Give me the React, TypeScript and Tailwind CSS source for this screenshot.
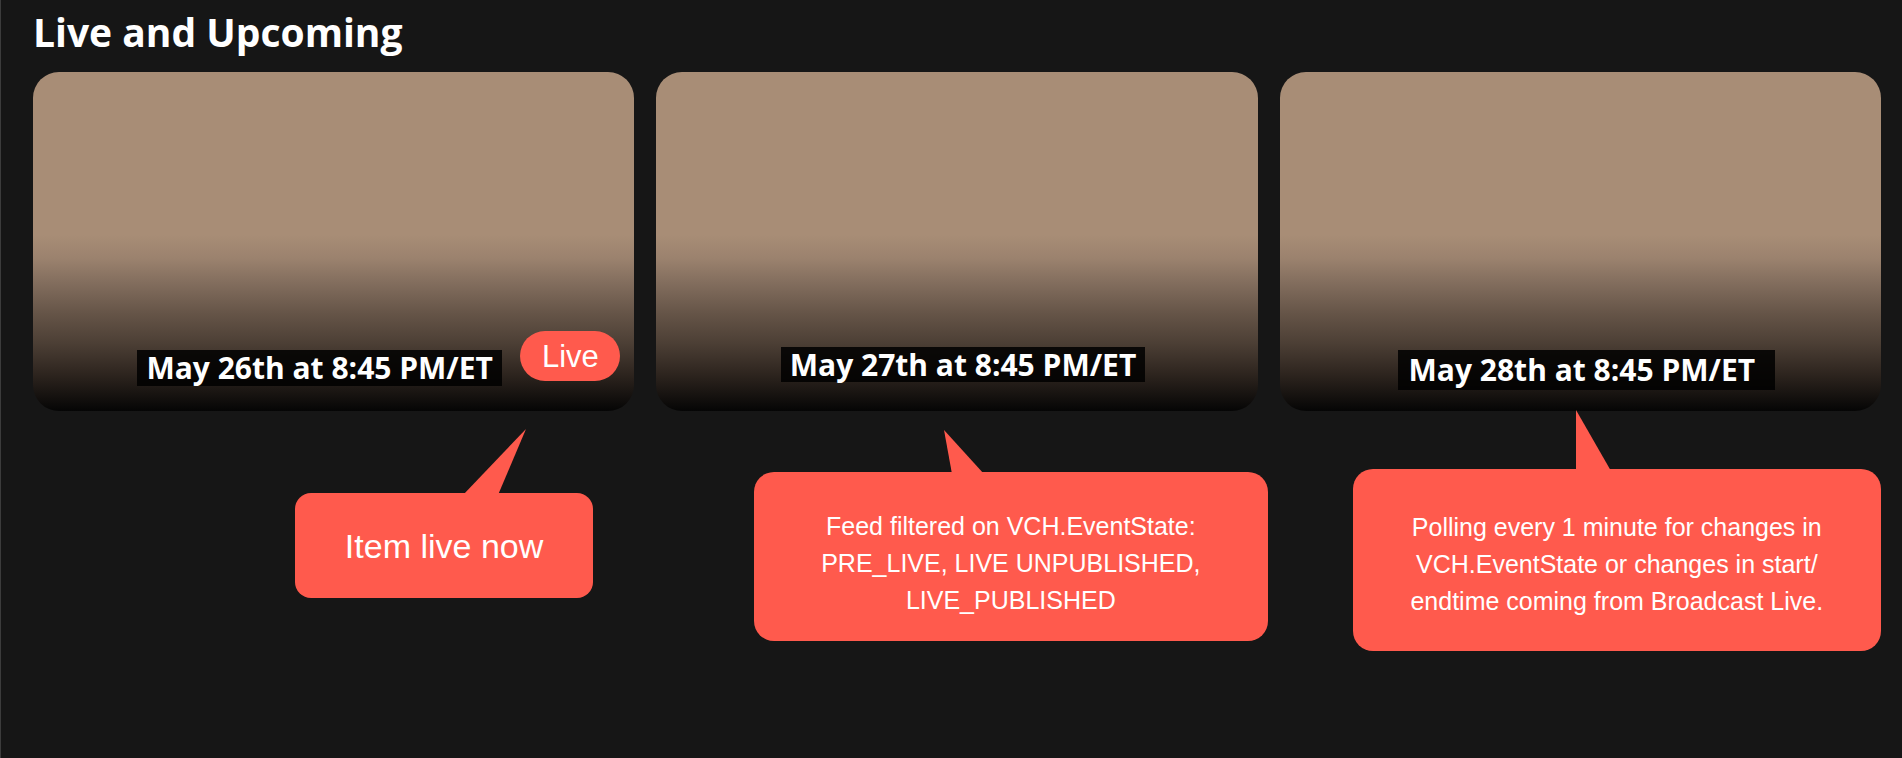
import React from 'react';

type Card = {
  date: string;
  live?: boolean;
  labelShift: string;
  labelPad: string;
};

const cards: Card[] = [
  { date: 'May 26th at 8:45 PM/ET', live: true, labelShift: 'pb-[25px] pr-[28px]', labelPad: 'px-[9px] h-[36px]' },
  { date: 'May 27th at 8:45 PM/ET', labelShift: 'pb-[29px] pl-[12px]', labelPad: 'px-[9px] h-[35px]' },
  { date: 'May 28th at 8:45 PM/ET', labelShift: 'pb-[21px] pl-[12px]', labelPad: 'pl-[11px] pr-[20px] h-[40px]' },
];

const thumbBg =
  'bg-[linear-gradient(to_bottom,#a88d76_0%,#a88d76_48%,#9b826e_55%,#836e5e_62%,#665548_71%,#4c3f35_80%,#2e251f_89%,#050505_100%)]';

const Thumb: React.FC<{ card: Card }> = ({ card }) => (
  <div className={`relative h-[339px] rounded-[26px] overflow-hidden ${thumbBg} flex flex-col justify-end items-center ${card.labelShift}`}>
    <div className={`flex items-center bg-black/85 ${card.labelPad}`}>
      <span className="font-['Open_Sans',sans-serif] font-bold text-[30px] leading-[36px] text-white whitespace-nowrap">
        {card.date}
      </span>
    </div>
    {card.live && (
      <div className="absolute right-[14px] bottom-[30px] w-[100px] h-[50px] rounded-full bg-[#ff5a4d] flex items-center justify-center">
        <span className="font-['Liberation_Sans',Arial,sans-serif] text-[31px] leading-none text-white">Live</span>
      </div>
    )}
  </div>
);

const Tail: React.FC<{ left: number; width: number; height: number; points: string }> = ({ left, width, height, points }) => (
  <svg
    className="absolute bottom-[calc(100%-2px)]"
    style={{ left }}
    width={width}
    height={height + 2}
    viewBox={`0 0 ${width} ${height + 2}`}
  >
    <polygon points={points} fill="#ff5a4d" />
  </svg>
);

export default function App() {
  return (
    <div className="min-h-[758px] w-[1902px] bg-[#161616] border-l border-[#3c3c3c] pl-[32px] pr-[21px] pt-[8px]">
      <h1 className="font-['Open_Sans',sans-serif] font-bold text-[39px] leading-[47px] text-white">
        Live and Upcoming
      </h1>

      <div className="mt-[17px] grid grid-cols-3 gap-x-[22px]">
        {cards.map((c) => (
          <Thumb key={c.date} card={c} />
        ))}
      </div>

      <div className="flex items-start font-['Liberation_Sans',Arial,sans-serif] text-white">
        {/* callout 1 */}
        <div className="relative ml-[262px] mt-[82px] w-[299px] h-[105px] rounded-[16px] bg-[#ff5a4d] flex items-center justify-center">
          <Tail left={168} width={64} height={64} points="0,66 35,66 63,0" />
          <span className="text-[34px] leading-none">Item live now</span>
        </div>

        {/* callout 2 */}
        <div className="relative ml-[161px] mt-[61px] w-[515px] h-[169px] rounded-[20px] bg-[#ff5a4d] flex items-center justify-center">
          <Tail left={189} width={42} height={42} points="9,44 41,44 1,0" />
          <p className="text-[25px] leading-[37px] text-center pt-[14px]">
            Feed filtered on VCH.EventState:
            <br />
            PRE_LIVE, LIVE UNPUBLISHED,
            <br />
            LIVE_PUBLISHED
          </p>
        </div>

        {/* callout 3 */}
        <div className="relative ml-[85px] mt-[58px] w-[530px] h-[182px] rounded-[20px] bg-[#ff5a4d] flex items-center justify-center">
          <Tail left={223} width={36} height={59} points="0,61 35,61 0,0" />
          <p className="text-[25px] leading-[37px] text-center pt-[8px]">
            Polling every 1 minute for changes in
            <br />
            VCH.EventState or changes in start/
            <br />
            endtime coming from Broadcast Live.
          </p>
        </div>
      </div>
    </div>
  );
}
